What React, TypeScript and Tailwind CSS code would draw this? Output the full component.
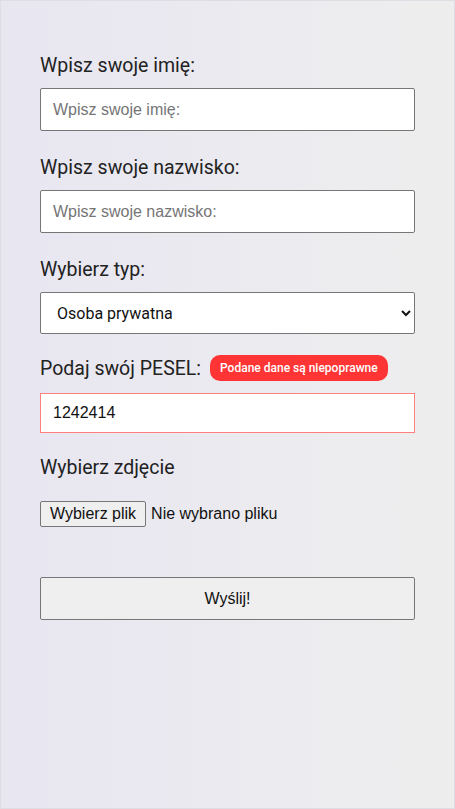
import React from "react";

export default function App() {
  const label = "block text-[19.5px] leading-[21px] text-[#222222]";
  const inputBase =
    "block w-full bg-white border border-[#767676] rounded-[2px] px-3 text-[16px] text-[#111] outline-none placeholder:text-[#757575]";
  const arial = { fontFamily: "'Liberation Sans', Arial, sans-serif" };
  return (
    <div
      className="w-[455px] h-[809px] border border-[#dedde3] bg-gradient-to-r from-[#e8e6f1] to-[#eeeeee] box-border"
      style={{ fontFamily: "Roboto, 'Liberation Sans', sans-serif" }}
    >
      <form className="px-[39px] pt-[54px]" onSubmit={(e) => e.preventDefault()}>
        <label className={label}>Wpisz swoje imię:</label>
        <input
          className={`${inputBase} mt-3 h-[43px]`}
          style={arial}
          placeholder="Wpisz swoje imię:"
        />

        <label className={`${label} mt-[26px]`}>Wpisz swoje nazwisko:</label>
        <input
          className={`${inputBase} mt-3 h-[43px]`}
          style={arial}
          placeholder="Wpisz swoje nazwisko:"
        />

        <label className={`${label} mt-[26px]`}>Wybierz typ:</label>
        <select
          className="mt-3 block w-full h-[42px] bg-white border border-[#767676] rounded-[2px] pl-3 pr-1 text-[16px] text-[#111]"
          defaultValue="prywatna"
        >
          <option value="prywatna">Osoba prywatna</option>
          <option value="firma">Firma</option>
        </select>

        <div className="mt-[21px] flex items-center h-[26px] gap-[9px]">
          <label className={label}>Podaj swój PESEL:</label>
          <span className="h-[26px] px-[10px] rounded-[10px] bg-[#ff3434] text-white text-[12px] font-medium flex items-center leading-none">
            Podane dane są niepoprawne
          </span>
        </div>
        <input
          className="mt-3 block w-full h-[40px] bg-white border border-[#ff7f7f] px-3 text-[16px] text-[#111] outline-none"
          style={arial}
          defaultValue="1242414"
        />

        <label className={`${label} mt-[24px]`}>Wybierz zdjęcie</label>
        <div
          className="mt-[23px] flex items-center h-[26px] text-[16px] text-[#111]"
          style={arial}
        >
          <span className="h-[26px] px-[9px] flex items-center bg-[#efefef] border border-[#767676] rounded-[2px] text-[#111]">
            Wybierz plik
          </span>
          <span className="ml-[5px]">Nie wybrano pliku</span>
        </div>

        <button
          type="submit"
          className="mt-[50px] block w-full h-[43px] bg-[#efefef] border border-[#767676] rounded-[2px] text-[16px] text-[#111]"
          style={arial}
        >
          Wyślij!
        </button>
      </form>
    </div>
  );
}
